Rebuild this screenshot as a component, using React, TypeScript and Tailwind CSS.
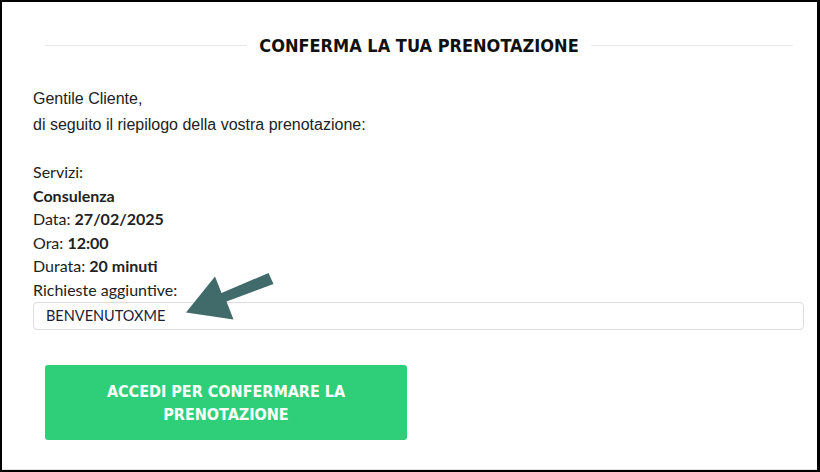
export default function App() {
  return (
    <div className="relative box-border h-[472px] w-[820px] overflow-hidden border-t-2 border-l-2 border-r-[3px] border-b-2 border-black bg-white">
      <div className="flex h-full flex-col border-b border-[#e4e4e4]">
        {/* Title */}
        <div className="mt-[30px] flex items-center pl-[43px] pr-[24px]">
          <div className="h-px flex-1 bg-[#e8e8e8]" />
          <h1 className="px-3 text-[18px] font-bold text-[#111] font-stretch-condensed [font-family:'DejaVu_Sans_Condensed','DejaVu_Sans',sans-serif]">
            CONFERMA LA TUA PRENOTAZIONE
          </h1>
          <div className="h-px flex-1 bg-[#e8e8e8]" />
        </div>

        {/* Greeting */}
        <div className="mt-[27px] pl-[31px] text-[16px] leading-[26px] text-[#222] [font-family:'Liberation_Sans',sans-serif]">
          <p>Gentile Cliente,</p>
          <p>di seguito il riepilogo della vostra prenotazione:</p>
        </div>

        {/* Summary */}
        <div className="mt-[22px] pl-[31px] pr-[13px] text-[16px] leading-[23.5px] text-[#222] [font-family:Lato,sans-serif]">
          <p>Servizi:</p>
          <p className="font-bold">Consulenza</p>
          <p>
            Data: <b>27/02/2025</b>
          </p>
          <p>
            Ora: <b>12:00</b>
          </p>
          <p>
            Durata: <b>20 minuti</b>
          </p>
          <p>Richieste aggiuntive:</p>
          <div className="mt-[1px] flex h-[28px] items-center rounded-[4px] border border-[#dcdcdc] px-3 text-[14.5px] text-[#1b1b3a]">
            BENVENUTOXME
          </div>
        </div>

        {/* Button */}
        <div className="mt-[35px] pl-[43px]">
          <button className="flex h-[75px] w-[362px] flex-col items-center justify-center rounded-[3px] bg-[#2ecf78] text-[16px] font-bold leading-[23px] text-white font-stretch-condensed [font-family:'DejaVu_Sans_Condensed','DejaVu_Sans',sans-serif]">
            <span>ACCEDI PER CONFERMARE LA</span>
            <span>PRENOTAZIONE</span>
          </button>
        </div>
      </div>

      {/* Annotation arrow */}
      <svg
        className="pointer-events-none absolute left-0 top-0"
        width="818"
        height="470"
        viewBox="2 2 818 470"
      >
        <polygon
          points="186,312.5 215,276.5 221.5,293 268.5,273 273.5,284 226.5,301.5 233.5,319.5"
          fill="#416b6a"
        />
      </svg>
    </div>
  );
}
